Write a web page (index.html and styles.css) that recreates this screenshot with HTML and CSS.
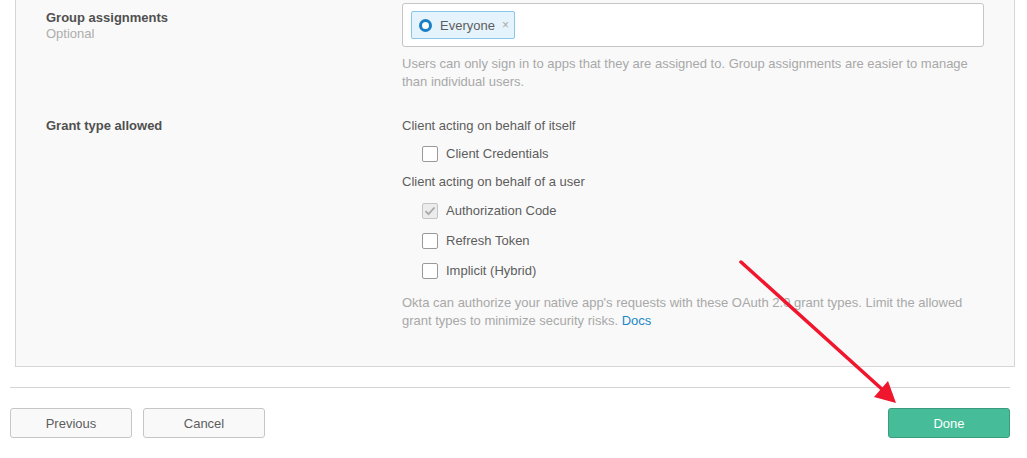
FILE: index.html
```html
<!DOCTYPE html>
<html lang="en">
<head>
<meta charset="utf-8">
<title>Okta app settings</title>
<link rel="stylesheet" href="styles.css">
</head>
<body>
<div class="page">
  <section class="panel">
    <div class="row row--groups">
      <div class="label">
        <div class="label-title">Group assignments</div>
        <div class="label-sub">Optional</div>
      </div>
      <div class="field">
        <div class="chooser">
          <span class="token">
            <span class="token-icon"></span>
            <span class="token-text">Everyone</span>
            <span class="token-x">×</span>
          </span>
        </div>
        <p class="help">Users can only sign in to apps that they are assigned to. Group assignments are easier to manage than individual users.</p>
      </div>
    </div>

    <div class="row row--grant">
      <div class="label">
        <div class="label-title">Grant type allowed</div>
      </div>
      <div class="field">
        <div class="subhead">Client acting on behalf of itself</div>
        <div class="checks checks--self">
          <label class="check"><span class="box"></span><span>Client Credentials</span></label>
        </div>
        <div class="subhead">Client acting on behalf of a user</div>
        <div class="checks checks--user">
          <label class="check"><span class="box box--checked-disabled"><svg width="12" height="10" viewBox="0 0 12 10"><path d="M1.5 5.2 L4.5 8.2 L10.5 1.5" fill="none" stroke="#a9a9a9" stroke-width="1.8"/></svg></span><span>Authorization Code</span></label>
          <label class="check"><span class="box"></span><span>Refresh Token</span></label>
          <label class="check"><span class="box"></span><span>Implicit (Hybrid)</span></label>
        </div>
        <p class="help help--grant">Okta can authorize your native app's requests with these OAuth 2.0 grant types. Limit the allowed grant types to minimize security risks. <a class="link" href="#">Docs</a></p>
      </div>
    </div>
  </section>

  <div class="footer">
    <div class="footer-left">
      <button class="btn">Previous</button>
      <button class="btn">Cancel</button>
    </div>
    <button class="btn btn--primary">Done</button>
  </div>

  <svg class="arrow" width="1027" height="458" viewBox="0 0 1027 458">
    <line x1="741" y1="262" x2="884" y2="391" stroke="#f0162d" stroke-width="3.5" stroke-linecap="round"/>
    <polygon points="896,403 874,397 888,381" fill="#f0162d"/>
  </svg>
</div>
</body>
</html>
```

FILE: styles.css
```css
* { box-sizing: border-box; }

html, body {
  margin: 0;
  padding: 0;
  background: #ffffff;
}

body {
  font-family: "Liberation Sans", Arial, sans-serif;
  font-size: 13px;
  color: #5d5d5d;
}

.page {
  position: relative;
  width: 1027px;
  height: 458px;
  overflow: hidden;
}

.panel {
  margin-left: 15px;
  width: 1000px;
  background: #f9f9f9;
  border: 1px solid #d6d6d6;
  border-top: none;
  padding: 3px 30px 36px 30px;
}

.row {
  display: grid;
  grid-template-columns: 356px 1fr;
}

.row--grant {
  margin-top: 26px;
}

.label-title {
  font-weight: bold;
  color: #505050;
  line-height: 16px;
}

.row--groups .label {
  padding-top: 7px;
}

.row--grant .label {
  padding-top: 1px;
}

.label-sub {
  color: #adadad;
  line-height: 16px;
}

.chooser {
  height: 44px;
  background: #ffffff;
  border: 1px solid #c6c6c6;
  border-radius: 3px;
  padding: 7px 8px;
  display: flex;
  align-items: flex-start;
}

.token {
  display: inline-flex;
  align-items: center;
  height: 28px;
  width: 104px;
  padding: 0 6px 0 7px;
  background: #e5f4fc;
  border: 1px solid #87c8ea;
  border-radius: 2px;
}

.token-icon {
  width: 13px;
  height: 13px;
  border-radius: 50%;
  border: 3.5px solid #1a7fc4;
  background: #ffffff;
  flex: none;
}

.token-text {
  margin-left: 8px;
  color: #5d5d5d;
}

.token-x {
  margin-left: 7px;
  color: #a9a9a9;
  font-size: 12px;
}

.help {
  margin: 8px 0 0;
  color: #a8a8a8;
  line-height: 18px;
}

.help--grant {
  margin-top: 14px;
  max-width: 570px;
}

.link {
  color: #1c87c9;
  text-decoration: none;
}

.subhead {
  line-height: 18px;
  color: #5d5d5d;
}

.checks {
  display: flex;
  flex-direction: column;
  gap: 12px;
  padding-left: 20px;
}

.checks--self {
  margin: 10px 0 10px;
}

.checks--user {
  margin-top: 11px;
}

.check {
  display: flex;
  align-items: center;
  gap: 8px;
  line-height: 18px;
  color: #5d5d5d;
}

.box {
  width: 16px;
  height: 16px;
  flex: none;
  background: #ffffff;
  border: 1px solid #9a9a9a;
  border-radius: 2px;
  display: flex;
  align-items: center;
  justify-content: center;
}

.box--checked-disabled {
  background: #ececec;
  border-color: #c4c4c4;
}

.footer {
  margin: 20px 17px 0 10px;
  border-top: 1px solid #d4d4d4;
  padding-top: 20px;
  display: flex;
  justify-content: space-between;
}

.footer-left {
  display: flex;
  gap: 11px;
}

.btn {
  width: 122px;
  height: 30px;
  font-family: inherit;
  font-size: 13px;
  color: #5d5d5d;
  background: #f9f9f9;
  border: 1px solid #c6c6c6;
  border-radius: 3px;
  padding: 0;
}

.btn--primary {
  background: #46bd98;
  border-color: #3a9c7d;
  color: #ffffff;
}

.arrow {
  position: absolute;
  left: 0;
  top: 0;
  pointer-events: none;
}
```
